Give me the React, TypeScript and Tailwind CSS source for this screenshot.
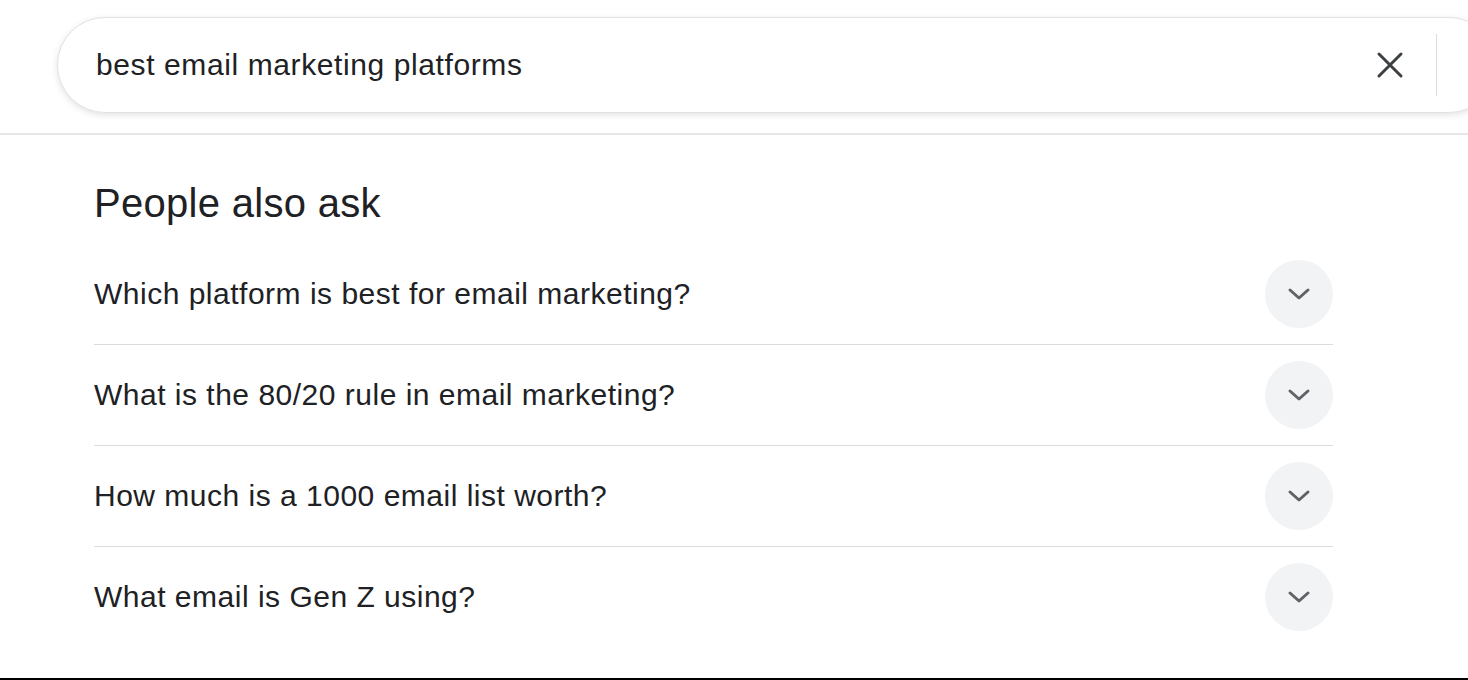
const questions = [
  "Which platform is best for email marketing?",
  "What is the 80/20 rule in email marketing?",
  "How much is a 1000 email list worth?",
  "What email is Gen Z using?",
];

const Chevron = () => (
  <svg width="24" height="14" viewBox="0 0 24 14" fill="none">
    <path d="M3 3 L12 11 L21 3" stroke="#5f6368" strokeWidth="3" strokeLinecap="round" strokeLinejoin="round" />
  </svg>
);

const App = () => {
  return (
    <div className="h-[680px] w-full overflow-hidden bg-white flex flex-col font-['Liberation_Sans',Arial,sans-serif] text-[#202124]">
      <div className="h-[135px] shrink-0 border-b-2 border-[#e6e6e6] pt-[17px] pl-[57px]">
        <div className="w-[1440px] h-[96px] rounded-full border border-[#e2e2e2] bg-white shadow-[0_2px_6px_0_rgba(64,60,67,0.14)] flex items-center">
          <span className="pl-[38px] text-[30px] tracking-[0.6px] leading-none flex-1">best email marketing platforms</span>
          <div className="w-[60px] flex justify-center">
            <svg width="28" height="28" viewBox="0 0 28 28" fill="none">
              <path d="M3 3 L25 25 M25 3 L3 25" stroke="#3c4043" strokeWidth="3" strokeLinecap="round" />
            </svg>
          </div>
          <div className="ml-[16px] w-px h-[62px] bg-[#dadce0]" />
          <div className="w-[59px]" />
        </div>
      </div>

      <div className="pl-[94px] w-[1333px]">
        <h2 className="mt-[45px] text-[40px] tracking-[0.3px] leading-[46px] font-normal">People also ask</h2>
        <div className="mt-[18px]">
          {questions.map((q, i) => (
            <div
              key={q}
              className={
                i < questions.length - 1
                  ? "h-[101px] border-b border-[#dadce0] flex items-center justify-between"
                  : "h-[100px] flex items-center justify-between"
              }
            >
              <span className="text-[30px] tracking-[0.5px] leading-none">{q}</span>
              <div className="w-[68px] h-[68px] rounded-full bg-[#f1f3f4] flex items-center justify-center">
                <Chevron />
              </div>
            </div>
          ))}
        </div>
      </div>

      <div className="mt-auto h-[2px] bg-black shrink-0" />
    </div>
  );
};

export default App;
